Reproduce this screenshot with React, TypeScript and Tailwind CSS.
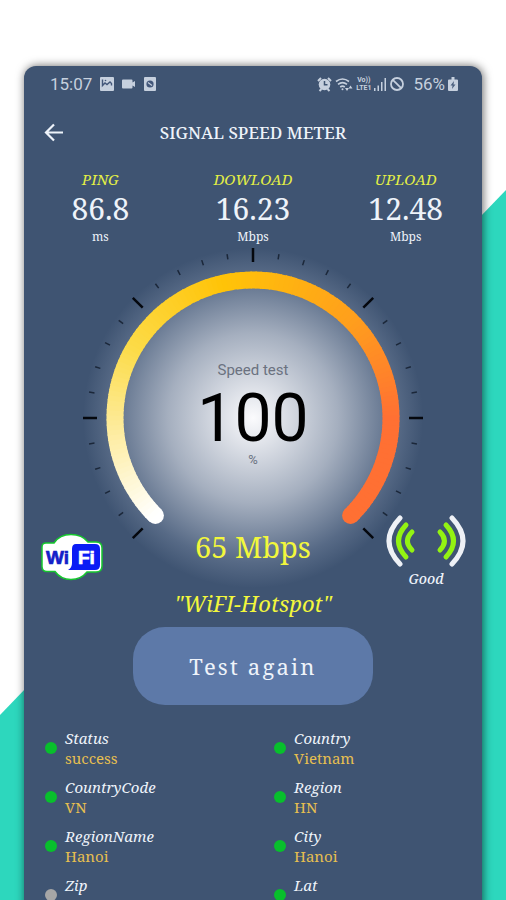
import type { ReactNode } from "react";

const serif = "font-['Noto_Serif','DejaVu_Serif_Condensed','DejaVu_Serif',serif]";

const stats = [
    { label: "PING", value: "86.8", unit: "ms" },
    { label: "DOWLOAD", value: "16.23", unit: "Mbps" },
    { label: "UPLOAD", value: "12.48", unit: "Mbps" },
];

const details = [
    { label: "Status", value: "success" },
    { label: "Country", value: "Vietnam" },
    { label: "CountryCode", value: "VN" },
    { label: "Region", value: "HN" },
    { label: "RegionName", value: "Hanoi" },
    { label: "City", value: "Hanoi" },
    { label: "Zip", value: "" },
    { label: "Lat", value: "21.0292" },
];

// one tick every 9 degrees, from -135 to 135
const ticks = Array.from({ length: 31 }, (_, i) => ({ angle: -135 + i * 9, major: i % 5 === 0 }));

// colour stops along the arc, position in degrees from its start
const stops = [
    { at: 0, rgb: [255, 255, 255] },
    { at: 75, rgb: [252, 219, 72] },
    { at: 122, rgb: [255, 196, 8] },
    { at: 180, rgb: [255, 159, 28] },
    { at: 225, rgb: [255, 112, 51] },
    { at: 270, rgb: [255, 112, 51] },
];

function arcColor(deg: number) {
    const next = Math.max(1, stops.findIndex((stop) => stop.at >= deg));
    const a = stops[next - 1];
    const b = stops[next];
    const t = (deg - a.at) / (b.at - a.at);
    return `rgb(${a.rgb.map((c, i) => Math.round(c + (b.rgb[i] - c) * t)).join(",")})`;
}

function arcPoint(deg: number) {
    const rad = ((deg - 225) * Math.PI) / 180;
    return `${138 * Math.cos(rad)} ${138 * Math.sin(rad)}`;
}

const segments = Array.from({ length: 135 }, (_, i) => {
    const from = i * 2;
    const to = Math.min(270, from + 2.5);
    return { d: `M${arcPoint(from)}A138 138 0 0 1 ${arcPoint(to)}`, color: arcColor(from + 1) };
});

function StatusBar() {
    return (
        <div className="flex items-center justify-between pl-[26px] pr-6 text-[17px] leading-5 text-[#c6d0de] font-[Roboto,sans-serif]">
            <div className="flex items-center gap-2">
                <span>15:07</span>
                <svg width="14" height="14" viewBox="0 0 14 14">
                    <rect width="14" height="14" rx="1" fill="currentColor" />
                    <path d="M2.500 2.500v6L5 6l2 1.500L10 5l1.500 1.500v2" stroke="#43577a" strokeWidth="1.400" fill="none" />
                    <circle cx="5.500" cy="3.500" r="0.800" fill="#43577a" />
                </svg>
                <svg width="14" height="14" viewBox="0 0 14 14">
                    <path d="M1 2.500h8.500q1 0 1 1v2L13 4v6l-2.500-1.500v2q0 1-1 1H1q-1 0-1-1v-7q0-1 1-1z" fill="currentColor" />
                </svg>
                <svg width="12" height="14" viewBox="0 0 12 14">
                    <rect width="12" height="14" rx="1" fill="currentColor" />
                    <circle cx="6" cy="7" r="3.600" fill="#43577a" />
                    <path d="M4 5.500 8 8.500" stroke="currentColor" strokeWidth="1.200" />
                </svg>
            </div>
            <div className="flex items-center gap-[3px]">
                <svg width="15" height="15" viewBox="0 0 15 15">
                    <circle cx="7.500" cy="7.500" r="5.800" fill="currentColor" />
                    <path d="M1 4 4 1M11 1l3 3M2.500 14l2-2M12.500 14l-2-2" stroke="currentColor" strokeWidth="2" />
                    <path d="M7.500 4v3.800h3" stroke="#3f5472" strokeWidth="1.500" fill="none" />
                </svg>
                <svg width="18" height="15" viewBox="0 0 18 15" fill="none" stroke="currentColor" strokeWidth="1.600">
                    <path d="M1 4.500q6.500-5 13 0M3 7.300q4.500-3.400 9 0M5.200 10q2.300-1.700 4.600 0" />
                    <circle cx="7.500" cy="12.300" r="1" fill="currentColor" stroke="none" />
                    <path d="M10 11h4l-2 3zM13.500 11.500h4l-2-3z" fill="currentColor" stroke="none" />
                </svg>
                <span className="text-center text-[7px] leading-[8px] font-bold">
                    Vo))
                    <br />
                    LTE1
                </span>
                <svg width="13" height="14" viewBox="0 0 13 14" fill="currentColor">
                    <path d="M0 11h1.500v3H0zM3.500 8.500H5V14H3.500zM7 5h1.500v9H7zM10.500 1H12v13h-1.500z" />
                </svg>
                <svg width="14" height="14" viewBox="0 0 14 14" fill="none" stroke="currentColor" strokeWidth="1.800">
                    <circle cx="7" cy="7" r="6" />
                    <path d="M2.800 2.800 11.200 11.200" />
                </svg>
                <span className="pl-[6px]">56%</span>
                <svg width="10" height="14" viewBox="0 0 10 14">
                    <path d="M3.500 0h3v2.500H9q1 0 1 1V13q0 1-1 1H1q-1 0-1-1V3.500q0-1 1-1h2.500z" fill="currentColor" />
                    <path d="M6 4 2.500 8.500h2L4 12l3.500-4.500h-2z" fill="#4b5f7e" />
                </svg>
            </div>
        </div>
    );
}

function Gauge({ children }: { children: ReactNode }) {
    return (
        <div className="mt-[3px] grid place-items-center">
            <svg className="[grid-area:1/1]" width="340" height="340" viewBox="-170 -170 340 340">
                <defs>
                    <radialGradient id="glow">
                        <stop offset="0" stopColor="#fbfbfd" />
                        <stop offset="0.500" stopColor="#a5afbf" />
                        <stop offset="0.850" stopColor="#576a86" />
                        <stop offset="1" stopColor="#3f5472" />
                    </radialGradient>
                </defs>
                <circle r="170" fill="url(#glow)" />
                {ticks.map((tick) => (
                    <line
                        key={tick.angle}
                        y1={tick.major ? -170 : -166}
                        y2={tick.major ? -156 : -160.5}
                        stroke={tick.major ? "#05080e" : "#1b2739"}
                        strokeWidth={tick.major ? 2.5 : 1.5}
                        transform={`rotate(${tick.angle})`}
                    />
                ))}
                <g fill="none" strokeWidth="17">
                    <path d="M-97.600 97.600h0.010" stroke="#ffffff" strokeLinecap="round" />
                    <path d="M97.600 97.600h0.010" stroke="#ff7033" strokeLinecap="round" />
                    {segments.map((segment) => (
                        <path key={segment.d} d={segment.d} stroke={segment.color} />
                    ))}
                </g>
            </svg>
            <div className="z-10 flex flex-col items-center pb-[10px] text-[#6b7280] [grid-area:1/1] font-[Roboto,sans-serif]">
                <div className="flex flex-col items-center">{children}</div>
            </div>
        </div>
    );
}

function WifiLogo() {
    return (
        <svg width="64" height="48" viewBox="0 0 64 48" role="img" aria-label="WiFi">
            <path
                d="M6 10h8C18 4 24 1.500 31 1.500S44 4 48 9h8q6 0 6 6v18q0 6-6 6h-9c-4 5-9 7.500-16 7.500S19 44 15 38.500H7q-5 0-5-5V14q0-4 4-4z"
                fill="#ffffff"
                stroke="#16c72e"
                strokeWidth="1.500"
            />
            <path d="M36 11h19q5 0 5 5v16q0 5-5 5H28q4-2 4-7V16q0-5 4-5z" fill="#0a1cf5" />
            <g fontFamily="Liberation Sans, sans-serif" fontWeight="700" fontSize="19" strokeWidth="0.700">
                <text x="6" y="31" fill="#1420c8" stroke="#1420c8">Wi</text>
                <text x="38" y="31" fill="#ffffff" stroke="#ffffff">Fi</text>
            </g>
        </svg>
    );
}

function SignalIcon() {
    return (
        <svg width="80" height="52" viewBox="0 0 80 52" fill="none" strokeLinecap="round">
            <g stroke="#eef1f6" strokeWidth="5">
                <path d="M14 3Q-8 26 14 49M66 3Q88 26 66 49" />
            </g>
            <g stroke="#93f312" strokeWidth="5">
                <path d="M20 10Q5 26 20 42M60 10Q75 26 60 42" />
                <path d="M26 17Q17 26 26 35M54 17Q63 26 54 35" />
            </g>
        </svg>
    );
}

export default function App() {
    return (
        <div className="relative isolate h-screen overflow-hidden bg-white pt-[66px]">
            <div className="absolute inset-0 -z-10 bg-[#2dd7bd] [clip-path:polygon(0_715px,100%_190px,100%_100%,0_100%)]" />
            <main className={`mx-6 min-h-full rounded-t-xl bg-[#3f5472] pt-2 text-[#eef3fa] shadow-[1px_0_10px_rgba(0,0,0,0.6)] ${serif}`}>
                <StatusBar />
                <header className="mt-[25px] grid grid-cols-[60px_1fr_60px] items-center">
                    <button type="button" aria-label="Back" className="pl-5">
                        <svg width="20" height="20" viewBox="0 0 20 20" fill="none" stroke="currentColor" strokeWidth="2.200">
                            <path d="M19 9.500H3M10 1.500l-8 8 8 8" />
                        </svg>
                    </button>
                    <h1 className="text-center text-[17px] leading-7 font-medium">SIGNAL SPEED METER</h1>
                </header>
                <section className="mt-[22px] grid grid-cols-3 text-center">
                    {stats.map((stat) => (
                        <div key={stat.label}>
                            <h2 className="text-[15px] leading-5 text-[#e3ef45] italic">{stat.label}</h2>
                            <p className="text-[30px] leading-10">{stat.value}</p>
                            <p className="text-xs leading-4">{stat.unit}</p>
                        </div>
                    ))}
                </section>
                <Gauge>
                    <span className="mb-[5px] text-[15px] leading-5">Speed test</span>
                    <span className="text-[66px] leading-[68px] text-black">100</span>
                    <span className="text-[13px] leading-[14px]">%</span>
                </Gauge>
                <section className="-mt-[73px] grid grid-cols-[1fr_auto_1fr] items-end px-4">
                    <div className="pb-[10px]">
                        <WifiLogo />
                    </div>
                    <p className="self-start pt-[14px] text-[29px] leading-9 text-[#f2f73c]">65 Mbps</p>
                    <div className="flex flex-col items-center justify-self-end">
                        <SignalIcon />
                        <span className="text-sm leading-6 font-medium italic">Good</span>
                    </div>
                </section>
                <p className="text-center text-[22px] leading-6 text-[#f2f73c] italic">&quot;WiFI-Hotspot&quot;</p>
                <button type="button" className="mx-auto mt-3 block h-[78px] w-[240px] rounded-[32px] bg-[#5d79a8] text-[22px] tracking-widest">
                    Test again
                </button>
                <dl className="mt-[23px] grid grid-cols-2 gap-y-[9px] text-[15px] leading-5">
                    {details.map((item) => (
                        <div key={item.label} className="flex items-center gap-2 pl-[21px]">
                            <span className={`size-3 rounded-full ${item.value ? "bg-[#08bf2c]" : "bg-[#a6a6a6]"}`} />
                            <div className="h-10">
                                <dt className="italic">{item.label}</dt>
                                <dd className="text-[#e6bf50]">{item.value}</dd>
                            </div>
                        </div>
                    ))}
                </dl>
            </main>
        </div>
    );
}
